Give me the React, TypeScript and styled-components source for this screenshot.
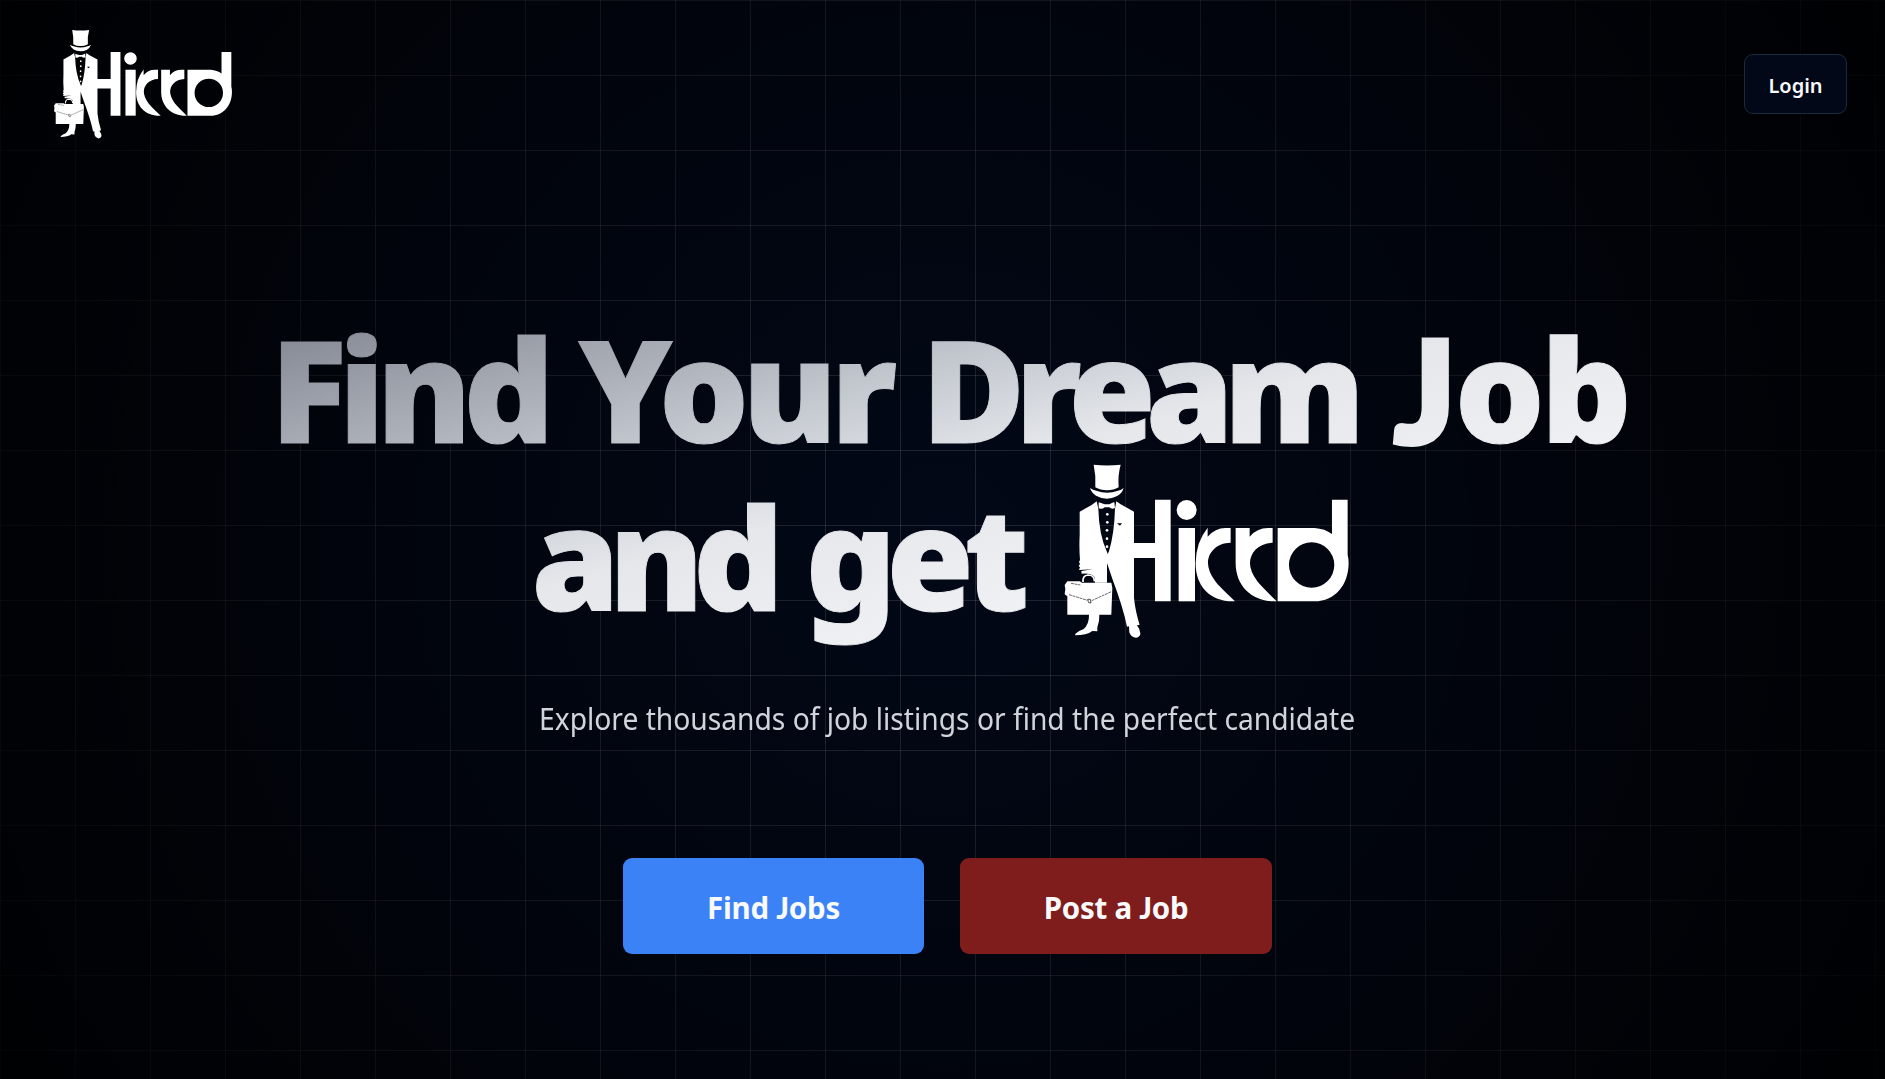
import React from "react";
import styled, { createGlobalStyle } from "styled-components";

const GlobalStyle = createGlobalStyle`
  * { box-sizing: border-box; }
  body { margin: 0; background: #020817; color: #f8fafc; font-family: "Noto Sans", sans-serif; }
`;

const Page = styled.div`
  height: 100vh;
  overflow: hidden;
  background:
    radial-gradient(circle, rgba(0, 0, 0, 0) 0%, rgba(0, 0, 0, 1) 111%),
    linear-gradient(to right, rgba(255, 255, 255, 0.12) 1px, transparent 1px) 0 0 / 75px 75px,
    linear-gradient(to bottom, rgba(255, 255, 255, 0.12) 1px, transparent 1px) 0 0 / 75px 75px,
    #020817;
`;

const Header = styled.header`
  display: flex;
  align-items: center;
  justify-content: space-between;
  height: 168px;
  padding: 0 38px 0 53px;
`;

const LogoArt = styled.svg<{ $width: number }>`
  display: block;
  flex: none;
  width: ${(p) => p.$width}px;
  height: auto;
  fill: #fff;
`;

const LoginButton = styled.button`
  width: 103px;
  height: 60px;
  border: 1px solid #1e293b;
  border-radius: 9px;
  background: #020817;
  color: #f8fafc;
  font: 600 20px "Noto Sans", sans-serif;
  padding: 2px 0 0;
`;

const Main = styled.main`
  display: flex;
  flex-direction: column;
  align-items: center;
  padding-left: 10px;
`;

const Title = styled.h1`
  margin: 136px 0 0;
  padding: 0 0 39px;
  display: flex;
  flex-direction: column;
  width: 1360px;
  font: 900 141.5px/168px "Noto Sans", sans-serif;
  color: transparent;
  -webkit-text-stroke: 1px transparent;
  background: linear-gradient(to bottom right, #7b808c, #d1d5db 39%, #e5e7eb 48%, #fff);
  -webkit-background-clip: text;
  background-clip: text;
  white-space: nowrap;
`;

const TitleLine = styled.span<{ $indent: number }>`
  display: flex;
  height: 168px;
  padding-left: ${(p) => p.$indent}px;
`;

const Word = styled.span<{ $width: number; $tracking: number }>`
  flex: none;
  width: ${(p) => p.$width}px;
  letter-spacing: ${(p) => p.$tracking}px;
`;

const TitleHook = styled.span`
  font-family: Lato, sans-serif;
  -webkit-text-stroke: 6px transparent;
  margin: 0 3px 0 7px;
`;

const ButtonHook = styled.span`
  font-family: Lato, sans-serif;
  font-weight: 900;
`;

const LogoSlot = styled.span`
  display: block;
  height: 168px;
  margin-top: -9px;
`;

const Subtitle = styled.p`
  margin: 19px 0 0;
  font-size: 30px;
  line-height: 42px;
  color: #d1d5db;
  white-space: nowrap;
  transform: scaleX(0.94);
`;

const Actions = styled.div`
  display: flex;
  gap: 36px;
  margin-top: 118px;
`;

const ActionButton = styled.button<{ $width: number; $tone: string }>`
  width: ${(p) => p.$width}px;
  height: 96px;
  border: 0;
  border-radius: 9px;
  background: ${(p) => p.$tone};
  color: #f8fafc;
  font: 700 29.5px "Noto Sans", sans-serif;
  letter-spacing: -0.25px;
  padding: 2px 0 0;
`;

function Logo({ width }: { width: number }) {
  return (
    <LogoArt $width={width} viewBox="40 25 862 530" role="img" aria-hidden="true">
      {/* top hat */}
      <path d="M132 30Q172 35 213 30Q204 62 207 98Q192 107 172 107Q152 107 137 98Q139 62 132 30Z" />
      <path d="M121 100Q130 106 140 108Q172 120 205 108Q215 106 222 100Q217 117 201 125Q187 132 172 132Q153 131 139 123Q125 114 121 100Z" />
      {/* bow tie */}
      <path d="M147 143Q157 146 165 149H179Q187 145 194 142L196 160Q186 165 179 158H165Q156 166 147 160Z" />
      {/* coat, trousers and crossbar */}
      <path d="M141 140L146 162Q148 240 172 292L174 298L178 290Q194 235 196 162L200 140L213 149L253 171V265H316V135H363V440H316V310H253V430Q258 475 270 510L262 512Q273 526 272 539Q269 549 258 549Q243 547 239 533L238 515L232 516Q221 460 188 372L172 325V384H136L134 366Q122 354 96 357L95 349L129 344L88 346L91 338L87 334L91 328L88 322L91 316Q88 280 90 240V171L126 151Z" />
      <path d="M202 206L217 206L211 213Z" fill="#01040f" />
      <g>
        <circle cx="173" cy="179" r="4" />
        <circle cx="173" cy="203" r="4" />
        <circle cx="172" cy="227" r="4" />
        <circle cx="172" cy="252" r="4" />
        <circle cx="172" cy="276" r="4" />
      </g>
      {/* briefcase and rear shoe */}
      <path d="M53 380H90L97 384H185L188 400L187 425L185 480H149Q150 500 143 518V530L128 529Q111 542 76 542Q76 534 101 524Q119 508 118 480H53V425L45 419L47 403L45 391Z" />
      <path d="M100 382Q98 363 115 361Q134 361 134 380" fill="none" stroke="#fff" strokeWidth="5" />
      <path d="M107 382Q105 369 117 368Q128 369 127 381" fill="none" stroke="#01040f" strokeWidth="4" />
      <path d="M58 420L113 437M126 438L185 411M64 386L92 391" fill="none" stroke="#01040f" strokeWidth="1.8" strokeDasharray="9 2" />
      <path d="M114 434L122 434L124 445L117 444Z" fill="none" stroke="#01040f" strokeWidth="2" />
      {/* lettering strokes */}
      <circle cx="411" cy="166" r="30" />
      <rect x="387" y="220" width="49" height="220" />
      <path d="M474 219V246Q497 220 527 220H543V264C500 265 475 294 475 325Q475 350 497 380Q506 393 556 440C486 443 437 398 438 325Q439 262 474 219Z" />
      <path d="M558 220H600V246Q622 220 655 220H669V264C625 266 601 295 601 326Q601 350 623 380Q633 393 681 440C612 443 558 398 558 325Z" />
      <path
        fillRule="evenodd"
        d="M684 220H795Q826 222 847 238V135H894V300Q897 312 897 325C897 392 855 440 795 440H684ZM718 331A68 68 0 1 0 854 331A68 68 0 1 0 718 331Z"
      />
    </LogoArt>
  );
}

export default function App() {
  return (
    <Page>
      <GlobalStyle />
      <Header>
        <Logo width={180} />
        <LoginButton>Login</LoginButton>
      </Header>
      <Main>
        <Title>
          <TitleLine $indent={3}>
            <Word $width={308} $tracking={-8}>Find </Word>
            <Word $width={343} $tracking={-6.5}>Your </Word>
            <Word $width={466} $tracking={-10.2}>Dream </Word>
            <Word $width={240} $tracking={-4}><TitleHook>J</TitleHook>ob</Word>
          </TitleLine>
          <TitleLine $indent={264}>
            <Word $width={274} $tracking={-10.7}>and </Word>
            <Word $width={257} $tracking={-9.9}>get</Word>
            <LogoSlot><Logo width={287.3} /></LogoSlot>
          </TitleLine>
        </Title>
        <Subtitle>Explore thousands of job listings or find the perfect candidate</Subtitle>
        <Actions>
          <ActionButton $width={301} $tone="#3b82f6">Find <ButtonHook>J</ButtonHook>obs</ActionButton>
          <ActionButton $width={312} $tone="#7f1d1d">Post a <ButtonHook>J</ButtonHook>ob</ActionButton>
        </Actions>
      </Main>
    </Page>
  );
}
